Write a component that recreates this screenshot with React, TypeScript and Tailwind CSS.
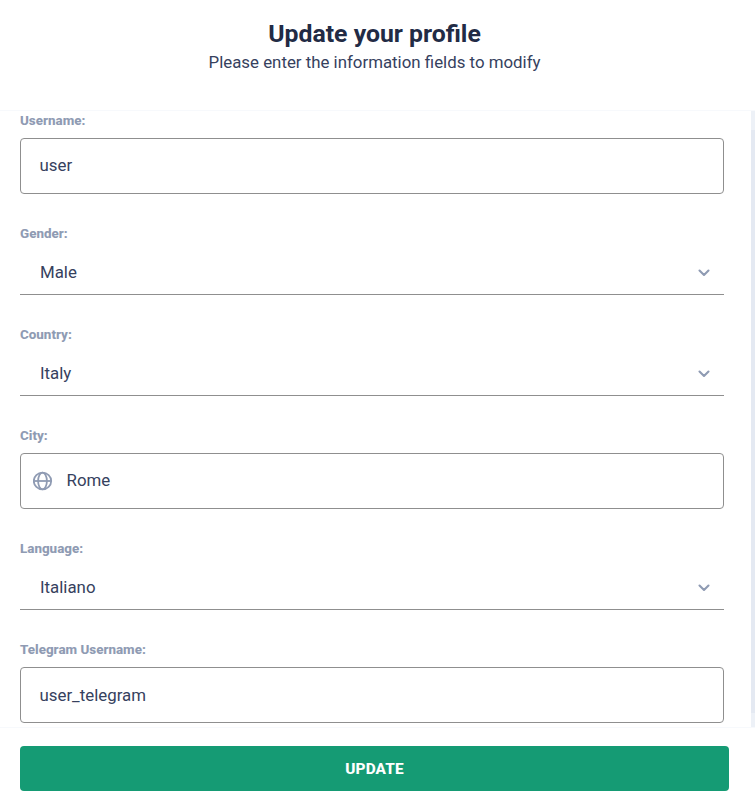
import React from "react";

function Chevron() {
  return (
    <svg width="12" height="8" viewBox="0 0 12 8" fill="none" stroke="#8f9bb3" strokeWidth="2.1" strokeLinecap="round" strokeLinejoin="round">
      <path d="M1.5 1.5 6 6l4.5-4.5" />
    </svg>
  );
}

function Globe() {
  return (
    <svg width="20" height="20" viewBox="0 0 20 20" fill="none" stroke="#8f9bb3" strokeWidth="1.8">
      <ellipse cx="9.5" cy="10" rx="8.7" ry="8.4" />
      <ellipse cx="9.5" cy="10" rx="4.4" ry="8.4" />
      <path d="M.8 10h17.4" />
    </svg>
  );
}

function Label({ children }: { children: string }) {
  return <label className="block h-5 text-[13.4px] leading-[19px] font-extrabold text-[#8f9bb3]">{children}</label>;
}

function TextField({ label, value, icon, textClass = "pb-[2px]" }: { label: string; value: string; icon?: boolean; textClass?: string }) {
  return (
    <div>
      <Label>{label}</Label>
      <div className={`mt-[7px] flex h-14 items-center rounded-[4px] border border-[#8f8f8f] ${icon ? "pl-3" : "pl-[18.5px]"}`}>
        {icon && <span className="mr-[13.5px]"><Globe /></span>}
        <span className={textClass}>{value}</span>
      </div>
    </div>
  );
}

function SelectField({ label, value }: { label: string; value: string }) {
  return (
    <div>
      <Label>{label}</Label>
      <div className="mt-[7px] flex h-11 items-center justify-between border-b border-[#8f8f8f] pr-[14px] pl-5">
        <span className="pb-[2px]">{value}</span>
        <Chevron />
      </div>
    </div>
  );
}

export default function App() {
  return (
    <div className="flex h-[801px] w-[755px] flex-col overflow-hidden bg-white font-['Roboto',sans-serif] text-[16.85px] leading-6 text-[#36415e]">
      <header className="h-[110px] pt-[18px] pr-[6px] text-center">
        <h1 className="text-[24.8px] leading-8 font-bold text-[#222b45]">Update your profile</h1>
        <p>Please enter the information fields to modify</p>
      </header>
      <main className="flex h-[618px] border-y border-[#f7f9fc]">
        <form className="flex w-[751px] flex-col gap-[30px] pr-[27px] pl-5">
          <TextField label="Username:" value="user" />
          <SelectField label="Gender:" value="Male" />
          <SelectField label="Country:" value="Italy" />
          <TextField label="City:" value="Rome" icon />
          <SelectField label="Language:" value="Italiano" />
          <TextField label="Telegram Username:" value="user_telegram" textClass="" />
        </form>
        <div className="h-full w-1 bg-[#edf1f7] pt-[19px]">
          <div className="h-[583px] bg-[#e4e9f2]" />
        </div>
      </main>
      <footer className="pt-[18px] pr-[26px] pl-5">
        <button className="h-[45px] w-full rounded-[4px] bg-[#159b74] text-[15.4px] font-extrabold tracking-[0.15px] text-white">UPDATE</button>
      </footer>
    </div>
  );
}
